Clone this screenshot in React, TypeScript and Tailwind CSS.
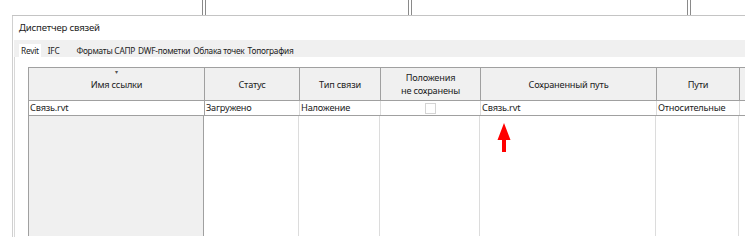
import React from "react";

const cols = [
  { w: "w-[176px]", title: ["Имя ссылки"], value: "Связь.rvt" },
  { w: "w-[95px]", title: ["Статус"], value: "Загружено" },
  { w: "w-[81px]", title: ["Тип связи"], value: "Наложение" },
  { w: "w-[100px]", title: ["Положения", "не сохранены"], value: "" },
  { w: "w-[176px]", title: ["Сохраненный путь"], value: "Связь.rvt" },
  { w: "w-[83px]", title: ["Пути"], value: "Относительные" },
];

const tabs = ["Revit", "IFC", "Форматы САПР", "DWF-пометки", "Облака точек", "Топография"];

function Bars() {
  return (
    <div className="flex gap-[2px] h-full">
      <div className="w-px h-full bg-[#8a8a8a]" />
      <div className="w-px h-full bg-[#8a8a8a]" />
    </div>
  );
}

export default function App() {
  return (
    <div
      className="w-[750px] h-[248px] bg-white overflow-hidden text-[#222]"
      style={{ fontFamily: '"Noto Sans", "Open Sans", sans-serif' }}
    >
      {/* верхняя полоса с разделителями */}
      <div className="h-[16px] flex">
        <div className="w-[12px]" />
        <div className="flex-1 max-w-[733px] border-b border-[#c4c4c4] flex">
          <div className="w-[190px]" />
          <Bars />
          <div className="w-[202px]" />
          <Bars />
          <div className="w-[275px]" />
          <Bars />
        </div>
      </div>

      {/* окно */}
      <div className="ml-[12px] w-[733px] h-[221px] border-l border-[#d0d0d0] flex flex-col">
        <div className="h-[24px] pl-[6px] flex items-center text-[9.6px] tracking-[-0.2px]">Диспетчер связей</div>

        <div className="h-[17px] bg-[#f0f0f0] ml-[1px] flex items-end pl-[5px] text-[8.3px] tracking-[-0.25px]">
          {tabs.map((t, i) => (
            <div
              key={t}
              className={
                i === 0
                  ? "h-[13px] bg-white px-[2px] leading-[13px] mr-[6px]"
                  : "h-[13px] px-[1px] leading-[13px] " + (i === 1 ? "mr-[15px]" : "mr-[1px]")
              }
            >
              {t}
            </div>
          ))}
        </div>

        <div className="flex-1 flex border-l border-[#d8d8d8] ml-[1px]">
          <div className="w-[13px]" />
          <div className="flex-1 pt-[10px] flex flex-col text-[9.2px] tracking-[-0.2px]">
            {/* заголовок */}
            <div className="h-[34px] flex bg-[#f0f0f0] border-t border-l border-b border-[#a0a0a0]">
              {cols.map((c, i) => (
                <div
                  key={i}
                  className={`${c.w} shrink-0 border-r border-[#a0a0a0] flex flex-col items-center justify-center leading-[13px] relative`}
                >
                  {i === 0 && (
                    <span className="absolute top-[-2px] left-1/2 -translate-x-1/2 text-[6px] text-[#555]">▾</span>
                  )}
                  {c.title.map((l) => (
                    <span key={l}>{l}</span>
                  ))}
                </div>
              ))}
              <div className="flex-1" />
            </div>

            {/* строка */}
            <div className="h-[15px] flex border-l border-b border-[#a0a0a0]">
              {cols.map((c, i) => (
                <div
                  key={i}
                  className={`${c.w} shrink-0 border-r ${i === 0 ? "border-[#a0a0a0]" : "border-[#dcdcdc]"} flex items-center ${i === 3 ? "justify-center" : "pl-[1px]"} leading-[14px]`}
                >
                  {i === 3 ? (
                    <div className="w-[11px] h-[11px] border border-[#d4d4d4] bg-white" />
                  ) : (
                    c.value
                  )}
                </div>
              ))}
              <div className="flex-1" />
            </div>

            {/* пустая область */}
            <div className="flex-1 flex mb-[1px]">
              {cols.map((c, i) => (
                <div
                  key={i}
                  className={`${c.w} shrink-0 ${
                    i === 0 ? "bg-[#f0f0f0] border-l border-r border-[#a0a0a0]" : "border-r border-[#dcdcdc]"
                  } relative`}
                >
                  {i === 4 && (
                    <svg className="absolute left-[17px] top-[7px]" width="14" height="30" viewBox="0 0 14 30">
                      <path d="M7 0 L13.5 17 L9 17 L9 29 L5 29 L5 17 L0.5 17 Z" fill="#ff0000" />
                    </svg>
                  )}
                </div>
              ))}
              <div className="flex-1" />
            </div>
          </div>
        </div>
      </div>
    </div>
  );
}
